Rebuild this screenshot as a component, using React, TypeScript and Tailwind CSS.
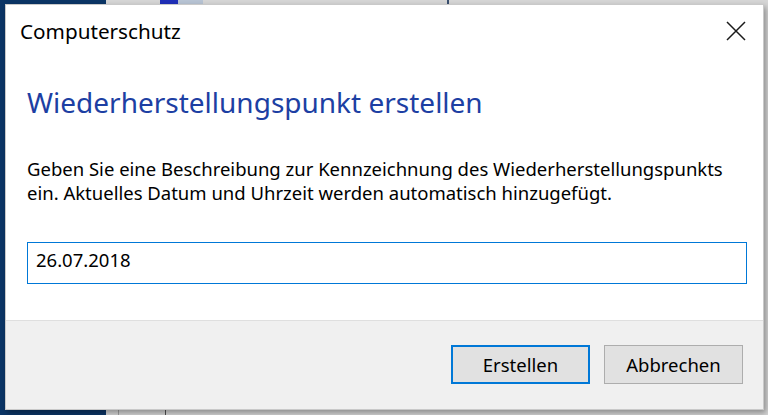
import React from "react";

export default function App() {
  const font = { fontFamily: '"Noto Sans", "Open Sans", sans-serif' };
  return (
    <div className="relative w-[768px] h-[415px] overflow-hidden bg-[#d6d6d6]" style={font}>
      {/* desktop behind */}
      <div className="absolute left-0 top-0 w-[106px] h-[415px] bg-[#0b3566]" />
      <div className="absolute left-[160px] top-0 w-[18px] h-[4px] bg-[#1f2fb8]" />
      <div className="absolute left-[178px] top-0 w-[25px] h-[4px] bg-[#b8c4d4]" />
      <div className="absolute left-[447px] top-0 w-[2px] h-[4px] bg-[#3a5070]" />
      <div className="absolute left-[118px] top-[410px] w-[1px] h-[5px] bg-[#a0a0a0]" />
      <div className="absolute left-[165px] top-[410px] w-[1px] h-[5px] bg-[#505050]" />
      {/* dialog window */}
      <div className="absolute left-[5px] top-[4px] w-[759px] h-[406px] flex flex-col bg-white border border-[#c9c9c9] shadow-[2px_3px_6px_rgba(0,0,0,0.35)]">
        {/* title bar */}
        <div className="h-[54px] flex items-center justify-between pl-[14px] pr-[17px]">
          <span className="text-[20.7px] text-black">Computerschutz</span>
          <svg width="20" height="20" viewBox="0 0 20 20" className="-mt-[3px]">
            <path d="M1 1 L19 19 M19 1 L1 19" stroke="#1a1a1a" strokeWidth="1.5" />
          </svg>
        </div>
        {/* content */}
        <div className="flex-1 flex flex-col px-[21px] pt-[26px]">
          <h1 className="text-[28px] leading-[34px] text-[#1d3fa3]">Wiederherstellungspunkt erstellen</h1>
          <p className="mt-[38px] text-[18.5px] leading-[24px] text-black">
            Geben Sie eine Beschreibung zur Kennzeichnung des Wiederherstellungspunkts
            <br />
            ein. Aktuelles Datum und Uhrzeit werden automatisch hinzugefügt.
          </p>
          <div className="mt-[37px] w-[720px] h-[42px] border border-[#0078d7] px-[8px] pt-[4px] text-[18.5px] leading-[25px] text-black">
            26.07.2018
          </div>
        </div>
        {/* footer */}
        <div className="h-[89px] bg-[#f0f0f0] border-t border-[#dfdfdf] flex items-start justify-end gap-[14px] pt-[24px] pr-[20px]">
          <button className="w-[139px] h-[39px] bg-[#e1e1e1] border-2 border-[#0078d7] text-[18.5px] text-black">
            Erstellen
          </button>
          <button className="w-[139px] h-[39px] bg-[#e1e1e1] border border-[#adadad] text-[18.5px] text-black">
            Abbrechen
          </button>
        </div>
      </div>
    </div>
  );
}
